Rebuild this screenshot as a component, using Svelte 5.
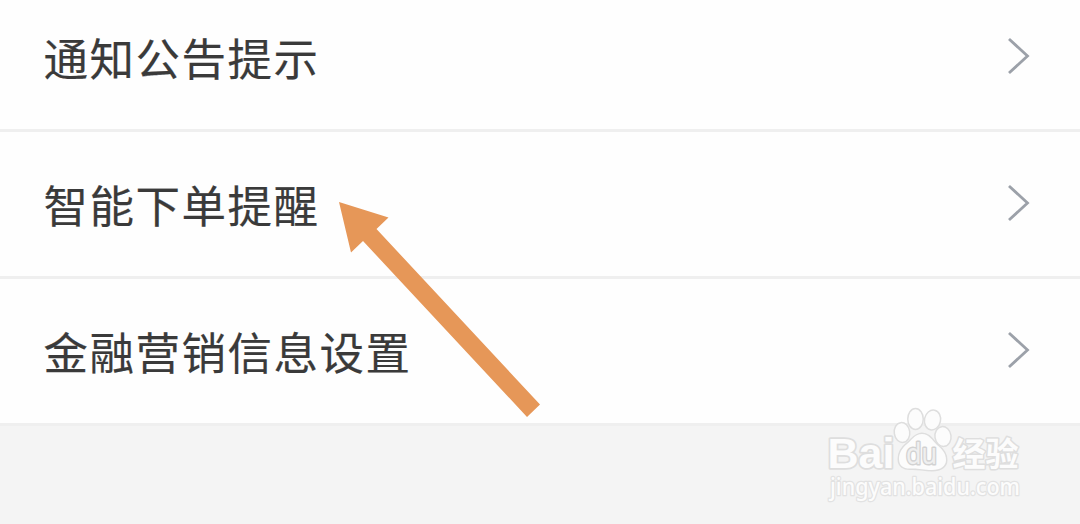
<script lang="ts">
	const items = ['通知公告提示', '智能下单提醒', '金融营销信息设置'];
</script>

<main class="page">
	<ul class="settings">
		{#each items as item}
			<li class="row">
				<span class="label">{item}</span>
				<svg class="chevron" width="24" height="40" viewBox="0 0 24 40" aria-hidden="true">
					<path d="M2 3 20.5 20 2 37" />
				</svg>
			</li>
		{/each}
	</ul>

	<svg class="arrow" width="202" height="216" viewBox="0 0 202 216" aria-hidden="true">
		<path d="M0 0 49.5 15.5 37.5 27 201 202.5 188 215 24 39 12 50.5Z" />
	</svg>

	<svg class="watermark" width="220" height="110" viewBox="0 0 220 110" aria-label="Baidu 经验">
		<g class="mark">
			<text class="latin" x="12.5" y="67.5" textLength="67" lengthAdjust="spacingAndGlyphs">Bai</text>
			<ellipse cx="87" cy="32.5" rx="7" ry="9.2" transform="rotate(-8 87 32.5)" />
			<ellipse cx="100.5" cy="19" rx="7" ry="9.7" />
			<ellipse cx="117.5" cy="20" rx="7.3" ry="9.2" transform="rotate(12 117.5 20)" />
			<ellipse cx="128" cy="36.5" rx="7.3" ry="9.2" transform="rotate(-8 128 36.5)" />
			<path d="M107 34C100 34 97 40 92 44C87 48 84 53 84 59C84 66 89 69 96 68.500C103 68 108 70 117 70C126 70 131 66 131 60C131 53 127 49 122 45C117 40 114 34 107 34Z" />
			<text class="du" x="91" y="64" textLength="31" lengthAdjust="spacingAndGlyphs">du</text>
			<text class="han" x="137.5" y="65.5" textLength="66" lengthAdjust="spacingAndGlyphs">经验</text>
			<text class="url" x="15" y="94.5" textLength="190" lengthAdjust="spacingAndGlyphs">jingyan.baidu.com</text>
		</g>
	</svg>
</main>

<style>
	:global(body) {
		margin: 0;
		background: #f4f4f4;
	}

	.page {
		position: relative;
		height: 524px;
		overflow: hidden;
		background: #f4f4f4;
		font-family: 'Noto Sans CJK SC', sans-serif;
	}

	.settings {
		margin: -15px 0 0;
		padding: 0;
		list-style: none;
	}

	.row {
		box-sizing: border-box;
		height: 147px;
		display: flex;
		align-items: center;
		justify-content: space-between;
		padding: 0 49px 0 43.5px;
		border-bottom: 3px solid #efefef;
		background: #fefefe;
	}

	.label {
		font-size: 44.5px;
		letter-spacing: 1.5px;
		line-height: 66px;
		color: #3a3a3a;
		-webkit-text-stroke: 0.2px #3a3a3a;
	}

	.chevron {
		margin-bottom: 2px;
		fill: none;
		stroke: #9ca1a9;
		stroke-width: 2.8;
	}

	.arrow {
		position: absolute;
		left: 339px;
		top: 202px;
		fill: #e69758;
	}

	.watermark {
		position: absolute;
		left: 815px;
		top: 400px;
		overflow: visible;
	}

	.mark {
		fill: #fcfcfc;
		stroke: #dedede;
		stroke-width: 3;
		stroke-linejoin: round;
		paint-order: stroke;
	}

	.latin {
		font: 700 43px 'Liberation Sans', sans-serif;
		stroke-width: 3.5;
	}

	.du {
		font: 400 29px 'Noto Sans', sans-serif;
		fill: #efefef;
		stroke: #d2d2d2;
		stroke-width: 3;
	}

	.han {
		font: 700 33px 'Noto Sans CJK SC', sans-serif;
		stroke-width: 3;
	}

	.url {
		font: 500 23px 'Noto Sans', sans-serif;
		stroke: #e2e2e2;
		stroke-width: 2.5;
	}
</style>
